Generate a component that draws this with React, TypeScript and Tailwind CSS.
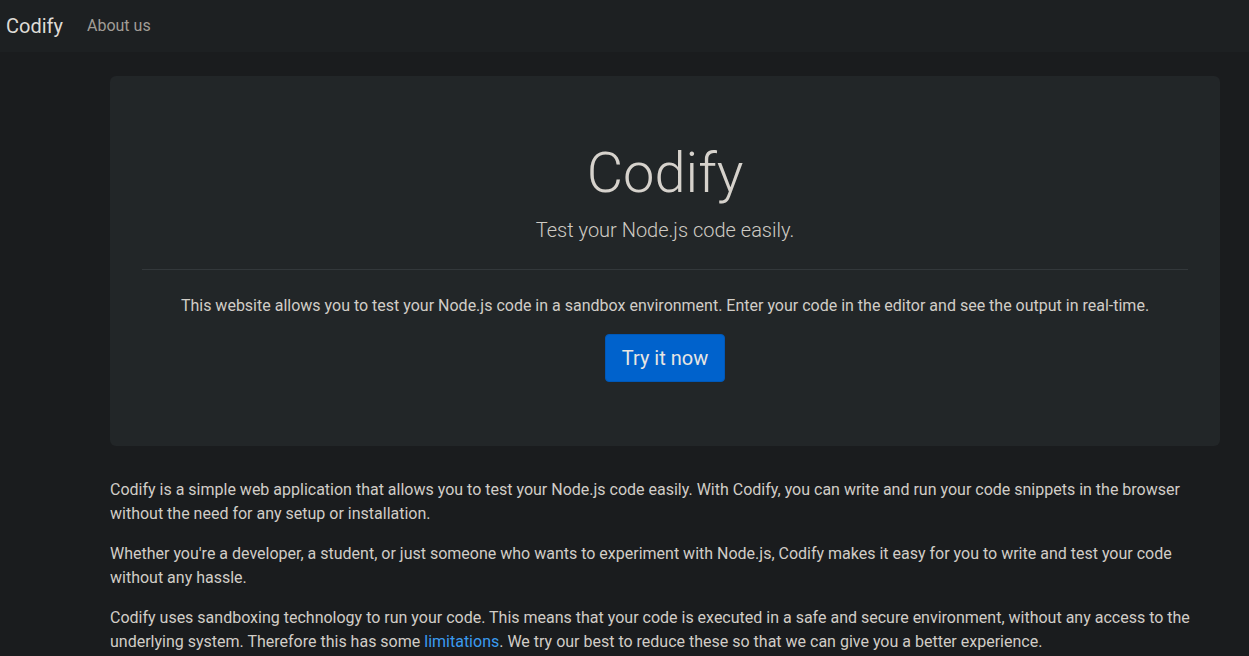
export default function App() {
  return (
    <div className="min-h-screen bg-[#1a1c1e] font-['Roboto',sans-serif] text-[#d1cdc7]">
      {/* Navbar */}
      <nav className="h-[52px] bg-[#1d2022] flex items-center px-[6px]">
        <span className="text-[20px] text-[#dedbd6] leading-[30px] mr-[24px]">Codify</span>
        <a className="text-[16px] text-[#a19d96]">About us</a>
      </nav>

      <main className="ml-[110px] w-[1110px] pt-[24px]">
        {/* Jumbotron */}
        <section className="bg-[#222628] rounded-[6px] px-[32px] pt-[64px] pb-[64px] mb-[32px] text-center">
          <h1 className="text-[56px] font-light leading-[67px] text-[#d6d2cc] mb-[8px]">Codify</h1>
          <p className="text-[20px] font-light leading-[30px] text-[#cfcbc4]">Test your Node.js code easily.</p>
          <hr className="my-[24px] border-t border-[#33383b]" />
          <p className="text-[16px] leading-[24px] mb-[16px]">
            This website allows you to test your Node.js code in a sandbox environment. Enter your code in the editor and see the output in real-time.
          </p>
          <button className="h-[48px] px-[16px] rounded-[4px] bg-[#0062cc] border border-[#0058b8] text-[20px] leading-[30px] text-[#e8e6e3]">
            Try it now
          </button>
        </section>

        <p className="text-[16px] leading-[24px] mb-[16px]">
          Codify is a simple web application that allows you to test your Node.js code easily. With Codify, you can write and run your code snippets in the browser without the need for any setup or installation.
        </p>
        <p className="text-[16px] leading-[24px] mb-[16px]">
          Whether you're a developer, a student, or just someone who wants to experiment with Node.js, Codify makes it easy for you to write and test your code without any hassle.
        </p>
        <p className="text-[16px] leading-[24px] mb-[16px]">
          Codify uses sandboxing technology to run your code. This means that your code is executed in a safe and secure environment, without any access to the underlying system. Therefore this has some{" "}
          <a className="text-[#3a9bf0]">limitations</a>. We try our best to reduce these so that we can give you a better experience.
        </p>
      </main>
    </div>
  );
}
